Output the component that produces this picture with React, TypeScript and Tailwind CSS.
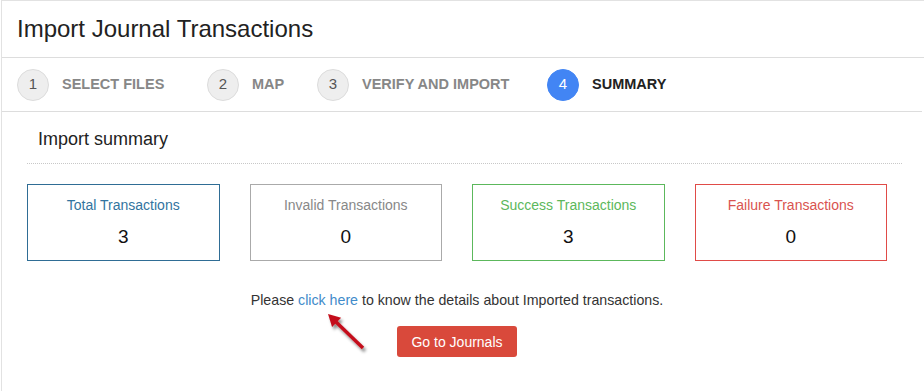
import React from "react";

const steps = [
  { n: "1", label: "SELECT FILES", w: "w-[190px]", active: false },
  { n: "2", label: "MAP", w: "w-[110px]", active: false },
  { n: "3", label: "VERIFY AND IMPORT", w: "w-[230px]", active: false },
  { n: "4", label: "SUMMARY", w: "w-[200px]", active: true },
];

const cards = [
  { title: "Total Transactions", value: "3", border: "border-[#2f6d95]", text: "text-[#3274a0]" },
  { title: "Invalid Transactions", value: "0", border: "border-[#aaaaaa]", text: "text-[#888888]" },
  { title: "Success Transactions", value: "3", border: "border-[#5cb85c]", text: "text-[#5cb85c]" },
  { title: "Failure Transactions", value: "0", border: "border-[#e04b48]", text: "text-[#d9534f]" },
];

export default function App() {
  return (
    <div className="w-[924px] h-[391px] bg-white pl-px font-['Liberation_Sans',Arial,sans-serif] overflow-hidden">
      <div className="h-full border-l border-t border-[#e2e2e2]">
        <div className="h-[57px] border-b border-[#dddddd] flex items-center pl-[15px]">
          <h1 className="text-[24px] leading-[30px] text-[#222222] pb-[1px]">Import Journal Transactions</h1>
        </div>
        <div className="h-[54px] border-b border-[#dddddd] mr-[2px] flex items-center pl-[15px]">
          {steps.map((s) => (
            <div key={s.n} className={`${s.w} flex items-center`}>
              <div
                className={
                  s.active
                    ? "w-8 h-8 rounded-full bg-[#4285f4] border border-[#4285f4] flex items-center justify-center text-white text-[15px]"
                    : "w-8 h-8 rounded-full bg-[#eeeeee] border border-[#dcdcdc] flex items-center justify-center text-[#555555] text-[15px]"
                }
              >
                {s.n}
              </div>
              <span
                className={
                  s.active
                    ? "ml-[13px] font-bold text-[14.5px] text-[#222222]"
                    : "ml-[13px] font-bold text-[14.5px] text-[#878787]"
                }
              >
                {s.label}
              </span>
            </div>
          ))}
        </div>
        <div className="ml-[25px] w-[875px] relative">
          <div className="pt-[15px] pb-[12px] pl-[11px] leading-[24px] text-[18px] text-[#222222] border-b border-dotted border-[#c8c8c8]">
            Import summary
          </div>
          <div className="w-[860px]">
            <div className="grid grid-cols-4 gap-[30px] mt-[20px]">
              {cards.map((c) => (
                <div key={c.title} className={`h-[77px] border ${c.border} flex flex-col items-center pt-[10px]`}>
                  <div className={`text-[14px] leading-[20px] ${c.text}`}>{c.title}</div>
                  <div className="mt-[10px] text-[19px] leading-[24px] text-[#111111]">{c.value}</div>
                </div>
              ))}
            </div>
            <p className="mt-[29px] text-center text-[14.2px] leading-[20px] text-[#333333]">
              Please <span className="text-[#428bca]">click here</span> to know the details about Imported transactions.
            </p>
            <div className="flex justify-center mt-[16px]">
              <button className="w-[120px] h-[31px] rounded-[3px] bg-[#d9493b] text-white text-[14px] leading-[20px]">
                Go to Journals
              </button>
            </div>
          </div>
          <svg
            className="absolute left-[291px] top-[192px]"
            width="56"
            height="56"
            viewBox="0 0 56 56"
          >
            <defs>
              <filter id="sh" x="-30%" y="-30%" width="160%" height="160%">
                <feDropShadow dx="2" dy="3" stdDeviation="1.6" floodColor="#000" floodOpacity="0.45" />
              </filter>
            </defs>
            <g filter="url(#sh)">
              <line x1="17" y1="17" x2="45" y2="44" stroke="#c4111b" strokeWidth="3.5" strokeLinecap="butt" />
              <polygon points="10,10 14.1,23.1 23.1,13.7" fill="#c4111b" />
            </g>
          </svg>
        </div>
      </div>
    </div>
  );
}
